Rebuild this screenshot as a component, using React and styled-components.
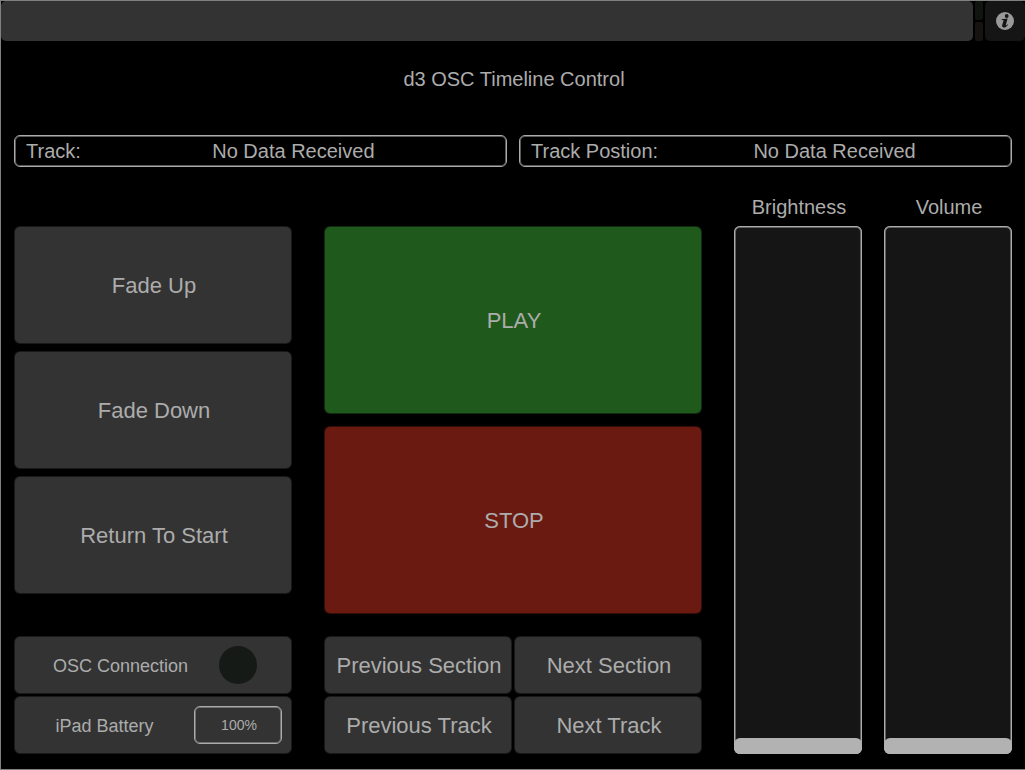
import { useState } from 'react';
import styled, { createGlobalStyle } from 'styled-components';

let GlobalStyle = createGlobalStyle`
  * {
    box-sizing: border-box;
  }
  body {
    margin: 0;
    background: #000;
    color: #acacac;
    font-family: 'Liberation Sans', Arial, sans-serif;
  }
`;

let Page = styled.div`
  display: flex;
  flex-direction: column;
  min-height: 100vh;
  border: 1px solid #808080;
  border-right: 0;
`;

let TopBar = styled.header`
  display: flex;
  height: 40px;
`;

let TabStrip = styled.div`
  flex: 1;
  background: #333;
  border-radius: 5px;
`;

let Leds = styled.div`
  display: flex;
  flex-direction: column;
  gap: 2px;
  width: 8px;
  margin: 0 2px;
`;

let Led = styled.span`
  flex: 1;
  background: ${(props) => props.$color};
  border-radius: 2px;
`;

let InfoBtn = styled.button`
  display: flex;
  align-items: center;
  justify-content: center;
  width: 40px;
  padding: 0;
  background: #151515;
  border: 0;
  border-radius: 5px;
`;

let Content = styled.main`
  flex: 1;
  display: flex;
  flex-direction: column;
  padding: 0 13px 15px;
`;

let Title = styled.h1`
  margin: 26px 0 44px;
  padding-left: 2px;
  font-size: 20px;
  line-height: 24px;
  font-weight: normal;
  text-align: center;
`;

let Fields = styled.div`
  display: flex;
  gap: 12px;
`;

let Field = styled.div`
  flex: 1;
  display: flex;
  padding-left: 11px;
  font-size: 20px;
  line-height: 30px;
  border: 1px solid #acacac;
  border-radius: 6px;
  box-shadow: inset 0 0 0 1px #585858;
`;

let FieldValue = styled.output`
  flex: 1;
  text-align: center;
`;

let Board = styled.div`
  flex: 1;
  display: grid;
  grid-template-columns: 278fr 378fr 278fr;
  gap: 32px;
  margin-top: 28px;
`;

let Column = styled.section`
  display: flex;
  flex-direction: column;
  gap: ${(props) => props.$gap};
  padding-top: 31px;
`;

let Stack = styled.div`
  flex: 1;
  display: flex;
  flex-direction: column;
  gap: ${(props) => props.$gap};
`;

let Pad = styled.button`
  flex: 1;
  padding: 2px 0 0 2px;
  background: ${(props) => props.$bg || '#333'};
  color: #acacac;
  font-family: inherit;
  font-size: 22px;
  border: 1px solid rgba(0, 0, 0, 0.5);
  border-radius: 6px;
`;

let NavGrid = styled.nav`
  display: grid;
  grid-template-columns: 1fr 1fr;
  grid-auto-rows: 58px;
  gap: 2px;
`;

let StatusList = styled.div`
  display: grid;
  grid-auto-rows: 58px;
  gap: 2px;
`;

let Status = styled.div`
  display: grid;
  grid-template-columns: 1fr 88px;
  align-items: center;
  justify-items: center;
  padding-right: 9px;
  background: #333;
  font-size: 18px;
  border: 1px solid #1a1a1a;
  border-radius: 6px;
`;

let StatusLabel = styled.span`
  padding-top: 2px;
  padding-left: ${(props) => props.$indent || '0'};
`;

let Lamp = styled.span`
  width: 38px;
  height: 38px;
  background: #151a16;
  border-radius: 50%;
`;

let Battery = styled.output`
  width: 88px;
  padding-left: 2px;
  font-size: 14px;
  line-height: 36px;
  text-align: center;
  border: 1px solid #acacac;
  border-radius: 6px;
  box-shadow: inset 0 0 0 1px #707070;
`;

let Faders = styled.section`
  display: grid;
  grid-template-columns: 1fr 1fr;
  gap: 22px;
`;

let FaderBox = styled.div`
  display: flex;
  flex-direction: column;
  gap: 7px;
`;

let FaderLabel = styled.label`
  padding-left: 2px;
  font-size: 20px;
  line-height: 24px;
  text-align: center;
`;

let FaderInput = styled.input`
  appearance: none;
  writing-mode: vertical-lr;
  direction: rtl;
  flex: 1;
  width: 100%;
  margin: 0;
  background: #151515;
  border-radius: 6px;
  box-shadow: inset 0 0 0 1px #acacac, inset 0 0 0 2px #606060;

  &::-webkit-slider-runnable-track {
    width: 100%;
    height: 100%;
  }
  &::-webkit-slider-thumb {
    appearance: none;
    width: -webkit-fill-available;
    height: 16px;
    background: #b2b2b2;
    border-radius: 6px;
  }
`;

function InfoIcon() {
  return (
    <svg width="18" height="18" viewBox="0 0 18 18" aria-hidden="true">
      <circle cx="9" cy="9" r="9" fill="#999" />
      <circle cx="10.7" cy="4" r="1.9" fill="#151515" />
      <path
        d="M5.6 7.2 L11.6 6.6 L9.8 12.9 C9.6 13.7 10.2 13.6 11.5 12.2 L12 12.7 C10.6 14.7 9.2 15.5 7.9 15.5 C6.4 15.5 5.8 14.6 6.2 13.1 L7.5 8.8 C7.7 8.1 7.1 7.9 5.5 7.9 Z"
        fill="#151515"
      />
    </svg>
  );
}

function Fader(props) {
  let [value, setValue] = useState(0);

  return (
    <FaderBox>
      <FaderLabel htmlFor={props.id}>{props.name}</FaderLabel>
      <FaderInput
        id={props.id}
        type="range"
        value={value}
        onChange={(e) => {
          setValue(Number(e.target.value));
        }}
      />
    </FaderBox>
  );
}

function App() {
  let fades = ['Fade Up', 'Fade Down', 'Return To Start'];
  let navs = ['Previous Section', 'Next Section', 'Previous Track', 'Next Track'];

  return (
    <>
      <GlobalStyle />
      <Page>
        <TopBar>
          <TabStrip />
          <Leds>
            <Led $color="#101510" />
            <Led $color="#181313" />
          </Leds>
          <InfoBtn aria-label="Info">
            <InfoIcon />
          </InfoBtn>
        </TopBar>
        <Content>
          <Title>d3 OSC Timeline Control</Title>
          <Fields>
            <Field>
              <span>Track:</span>
              <FieldValue>No Data Received</FieldValue>
            </Field>
            <Field>
              <span>Track Postion:</span>
              <FieldValue>No Data Received</FieldValue>
            </Field>
          </Fields>
          <Board>
            <Column $gap="42px">
              <Stack $gap="7px">
                {fades.map((name) => (
                  <Pad key={name}>{name}</Pad>
                ))}
              </Stack>
              <StatusList>
                <Status>
                  <StatusLabel $indent="32px">OSC Connection</StatusLabel>
                  <Lamp />
                </Status>
                <Status>
                  <StatusLabel>iPad Battery</StatusLabel>
                  <Battery>100%</Battery>
                </Status>
              </StatusList>
            </Column>
            <Column $gap="22px">
              <Stack $gap="12px">
                <Pad $bg="#1f591c">PLAY</Pad>
                <Pad $bg="#6b1a11">STOP</Pad>
              </Stack>
              <NavGrid>
                {navs.map((name) => (
                  <Pad key={name}>{name}</Pad>
                ))}
              </NavGrid>
            </Column>
            <Faders>
              <Fader id="brightness" name="Brightness" />
              <Fader id="volume" name="Volume" />
            </Faders>
          </Board>
        </Content>
      </Page>
    </>
  );
}

export default App;
